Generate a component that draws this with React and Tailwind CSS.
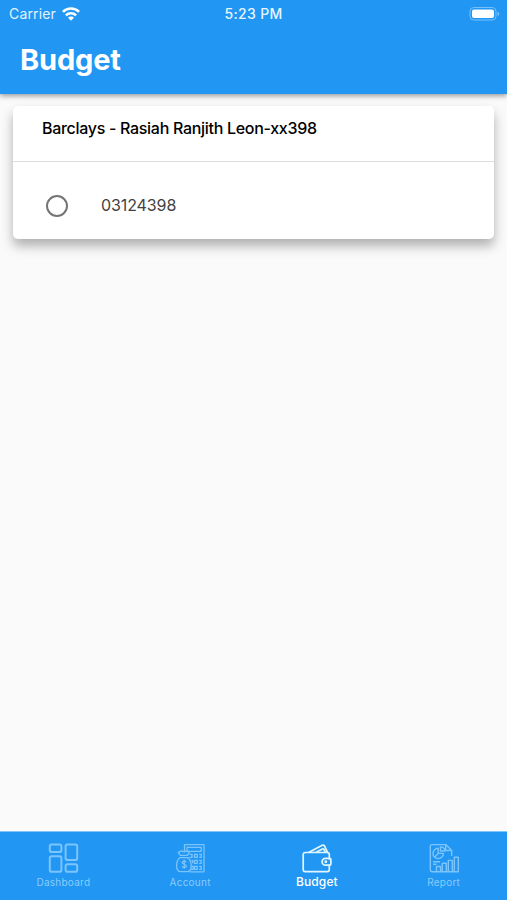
function DashboardIcon() {
  return (
    <svg viewBox="0 0 32 32" className="h-8 w-8" fill="none" stroke="currentColor" strokeWidth="2">
      <rect x="2.8" y="2.6" width="11.6" height="7.4" rx="1.8" />
      <rect x="18.6" y="2.6" width="11.6" height="15.4" rx="1.8" />
      <rect x="2.8" y="14.3" width="11.6" height="15.4" rx="1.8" />
      <rect x="18.6" y="22.3" width="11.6" height="7.4" rx="1.8" />
    </svg>
  );
}

function AccountIcon() {
  return (
    <svg viewBox="0 0 32 32" className="h-8 w-8" fill="none" stroke="currentColor" strokeWidth="1.3" strokeLinejoin="round">
      <path d="M10.5 10V2.6H30v27.2H15.5M13 5.3h14.2v4H13zM15.5 12.3h2.5v3h-2.5M20.5 12.3h2.8v3h-2.8zM25.2 12.3h2v3h-2M17.5 18.3h1.2v3M20.5 18.3h2.8v3h-2.8zM25.2 18.3h2v3h-2M17.5 24.3h1.7v3H16.5M20.5 24.3h2.8v3h-2.8zM25.2 24.3h2v3h-2" />
      <path d="M6.3 13.3l-2-3 3-1.4 3 1 3-1 2 1.4-2 3zM6.3 13.3h7M6 15.6h8M6 15.6C1.6 19.3 1 29.7 7 29.7h6c6 0 5-10.4.8-14.1" />
      <path d="M12.2 19.8c-.7-1-4-1.1-4 .8 0 2.1 4.2 1.2 4.2 3.4 0 2-3.5 2-4.5.7M10.2 17.8v9" />
    </svg>
  );
}

function WalletIcon() {
  return (
    <svg viewBox="0 0 32 32" className="h-8 w-8" fill="none" stroke="currentColor" strokeWidth="1.7" strokeLinecap="round" strokeLinejoin="round">
      <path d="M28.3 17v-4.5c0-1.3-.8-2-2-2H4.2c-1.3 0-2 .8-2 2v15c0 1.3.8 2.1 2 2.1h22.1c1.2 0 2-.8 2-2.1v-4.2" />
      <path d="M8 10.3l12.8-6.9c1.1-.6 2.2-.3 2.8.8l3 6.1M15.2 10.2l6.2-3.2c.7-.3 1.3-.1 1.7.7l1.2 2.4" />
      <path d="M24.5 16.4h4.2c.7 0 1.2.5 1.2 1.2V22c0 .7-.5 1.2-1.2 1.2h-4.2a3.4 3.4 0 0 1 0-6.8z" />
      <circle cx="24.8" cy="19.8" r=".6" />
    </svg>
  );
}

function ReportIcon() {
  return (
    <svg viewBox="0 0 32 32" className="h-8 w-8" fill="none" stroke="currentColor" strokeWidth="1.4" strokeLinejoin="round">
      <path d="M23.7 14V8.5l-6-5.9H4c-1 0-1.7.7-1.7 1.7v23.8c0 1 .7 1.7 1.7 1.7h26.3V15.2h-4v14.6M17.7 2.6v5.9h6M20.3 29.8V18.4h4v11.4M14.3 29.8v-8.6h4v8.6M8.5 29.8v-5.3h4v5.3" />
      <path d="M10.2 6.2a5.2 5.2 0 1 0 5.2 5.2h-5.2zM12.5 4.9V9H17a4.6 4.6 0 0 0-4.5-4.1zM10.2 11.4l-3.5 3.7M5 19.7h7M5 22.2h3.5" />
    </svg>
  );
}

function Tab({ icon, label, active = false }) {
  return (
    <div className={active ? "flex flex-1 flex-col items-center pt-[10px] text-[#e0f6ff]" : "flex flex-1 flex-col items-center pt-[10px] text-[#7bc4fc]"}>
      {icon}
      <span className={active ? "mt-px text-[12px] leading-[14px] font-medium tracking-[0.1px] text-white" : "mt-px text-[10px] leading-[14px] tracking-[0.25px] text-[#8accfd]"}>
        {label}
      </span>
    </div>
  );
}

export default function App() {
  return (
    <div className="flex h-[900px] w-[507px] flex-col overflow-hidden bg-[#fafafa] font-['Inter','Liberation_Sans',sans-serif]">
      <header className="z-10 h-[94px] shrink-0 bg-[#2196f3] text-white shadow-[0_2px_5px_rgba(0,0,0,0.38)]">
        <div className="grid h-[27px] grid-cols-3 items-center pr-[6px] pl-[9px]">
          <div className="flex items-center gap-[6px] text-[14px] tracking-[0.15px] text-[#e2f4ff]">
            <span>Carrier</span>
            <svg viewBox="0 0 18 14" className="h-[14px] w-[18px]" fill="none" stroke="white" strokeWidth="2.5">
              <path d="M.9 4.8C5.5.4 12.5.4 17.1 4.8M3.9 8.3c2.8-2.7 7.4-2.7 10.2 0" />
              <path d="M6 10.7c1.5-1.7 4.5-1.7 6 0L9 13.8z" fill="white" stroke="none" />
            </svg>
          </div>
          <div className="-ml-[3px] text-center text-[14px] font-medium tracking-[0.35px] text-[#e8f7ff]">5:23 PM</div>
          <svg viewBox="0 0 32 16" className="h-4 w-8 justify-self-end">
            <rect x="1" y="1.5" width="26" height="12.5" rx="3.8" fill="none" stroke="#77c2fb" />
            <rect x="3" y="3.5" width="22" height="8.5" rx="2" fill="white" />
            <path d="M28.5 5.7c2.3.7 2.3 3.8 0 4.4z" fill="#77c2fb" />
          </svg>
        </div>
        <h1 className="pt-px pl-[20px] text-[29px] leading-[64px] font-bold tracking-[-0.15px]">Budget</h1>
      </header>

      <main className="flex-1 px-[13px] pt-3">
        <section className="h-[133px] rounded-[5px] bg-white shadow-[0_7px_12px_rgba(0,0,0,0.3)]">
          <h2 className="h-[56px] border-b border-[#dedede] pt-[10px] pl-[29px] text-[16px] leading-6 font-medium tracking-[-0.3px] text-black">
            Barclays - Rasiah Ranjith Leon-xx398
          </h2>
          <div className="flex h-[77px] items-center gap-[33px] pt-[10px] pl-[33px]">
            <span className="h-[22px] w-[22px] rounded-full border-2 border-[#757575]" />
            <span className="-mt-[2px] text-[16px] tracking-[-0.1px] text-[#424242]">03124398</span>
          </div>
        </section>
      </main>

      <nav className="flex h-[69px] shrink-0 border-t border-[#84c5f8] bg-[#2196f3]">
        <Tab icon={<DashboardIcon />} label="Dashboard" />
        <Tab icon={<AccountIcon />} label="Account" />
        <Tab icon={<WalletIcon />} label="Budget" active />
        <Tab icon={<ReportIcon />} label="Report" />
      </nav>
    </div>
  );
}
